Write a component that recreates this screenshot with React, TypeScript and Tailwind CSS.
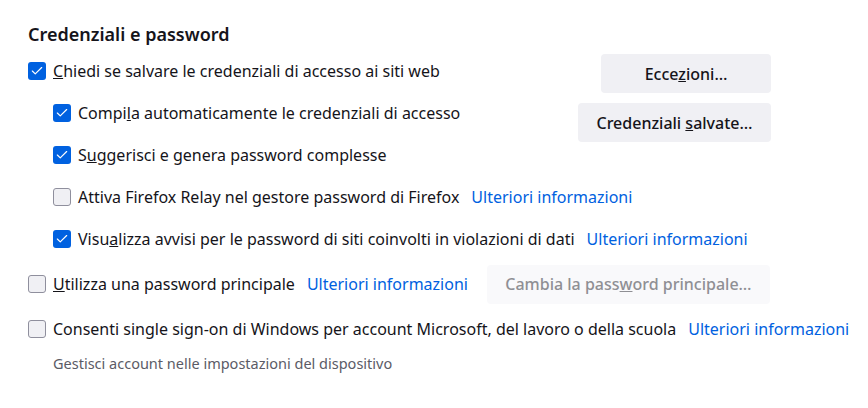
import { Check } from 'lucide-react'

const LINK = 'Ulteriori informazioni'

function Box({ checked }: { checked: boolean }) {
  return checked ? (
    <span className="flex h-[18px] w-[18px] shrink-0 items-center justify-center rounded-[3px] bg-[#0061e0]">
      <Check size={14} strokeWidth={2} className="text-white" />
    </span>
  ) : (
    <span className="h-[18px] w-[18px] shrink-0 rounded-[3px] border border-[#8f8f9d] bg-[#f0f0f4]" />
  )
}

function Row({
  checked,
  children,
  link,
  className = '',
}: {
  checked: boolean
  children: React.ReactNode
  link?: boolean
  className?: string
}) {
  return (
    <div className={`flex h-[42px] items-center ${className}`}>
      <Box checked={checked} />
      <span className="ml-[7px] whitespace-nowrap">{children}</span>
      {link && <a className="ml-[12px] whitespace-nowrap text-[#0061e0]">{LINK}</a>}
    </div>
  )
}

function Btn({ children, disabled, w }: { children: React.ReactNode; disabled?: boolean; w: string }) {
  return (
    <button
      className={`h-[39px] whitespace-nowrap rounded-[4px] font-medium ${w} ${
        disabled ? 'bg-[#f9f9fb] text-[#8f8f94]' : 'bg-[#f0f0f4] text-[#15141a]'
      }`}
    >
      {children}
    </button>
  )
}

export default function App() {
  return (
    <div className="min-h-screen bg-white pl-[28px] pt-[23px] text-[16px] text-[#15141a] [font-family:'Noto_Sans',sans-serif]">
      <h2 className="text-[18px] font-semibold leading-[22px]">Credenziali e password</h2>

      <div className="mt-[5px] flex w-[743px]">
        <div className="min-w-0 flex-1">
          <Row checked>
            <u>C</u>hiedi se salvare le credenziali di accesso ai siti web
          </Row>
          <div className="pl-[25px]">
            <Row checked>
              Compi<u>l</u>a automaticamente le credenziali di accesso
            </Row>
            <Row checked>
              S<u>u</u>ggerisci e genera password complesse
            </Row>
            <Row checked={false} link>
              Attiva Firefox Relay nel gestore password di Firefox
            </Row>
            <Row checked link>
              Visu<u>a</u>lizza avvisi per le password di siti coinvolti in violazioni di dati
            </Row>
          </div>
        </div>
        <div className="flex shrink-0 flex-col items-end gap-[10px] pt-[4px]">
          <Btn w="w-[170px]">
            Ecce<u>z</u>ioni…
          </Btn>
          <Btn w="w-[193px]">
            Credenziali <u>s</u>alvate…
          </Btn>
        </div>
      </div>

      <div className="mt-[3px] flex items-center">
        <Row checked={false} link>
          <u>U</u>tilizza una password principale
        </Row>
        <div className="ml-[19px]">
          <Btn disabled w="w-[283px]">
            Cambia la pass<u>w</u>ord principale…
          </Btn>
        </div>
      </div>

      <Row checked={false} link className="mt-[3px]">
        Consenti single sign-on di Windows per account Microsoft, del lavoro o della scuola
      </Row>
      <p className="ml-[25px] mt-[3px] text-[14.5px] leading-[20px] text-[#5b5b66]">
        Gestisci account nelle impostazioni del dispositivo
      </p>
    </div>
  )
}
